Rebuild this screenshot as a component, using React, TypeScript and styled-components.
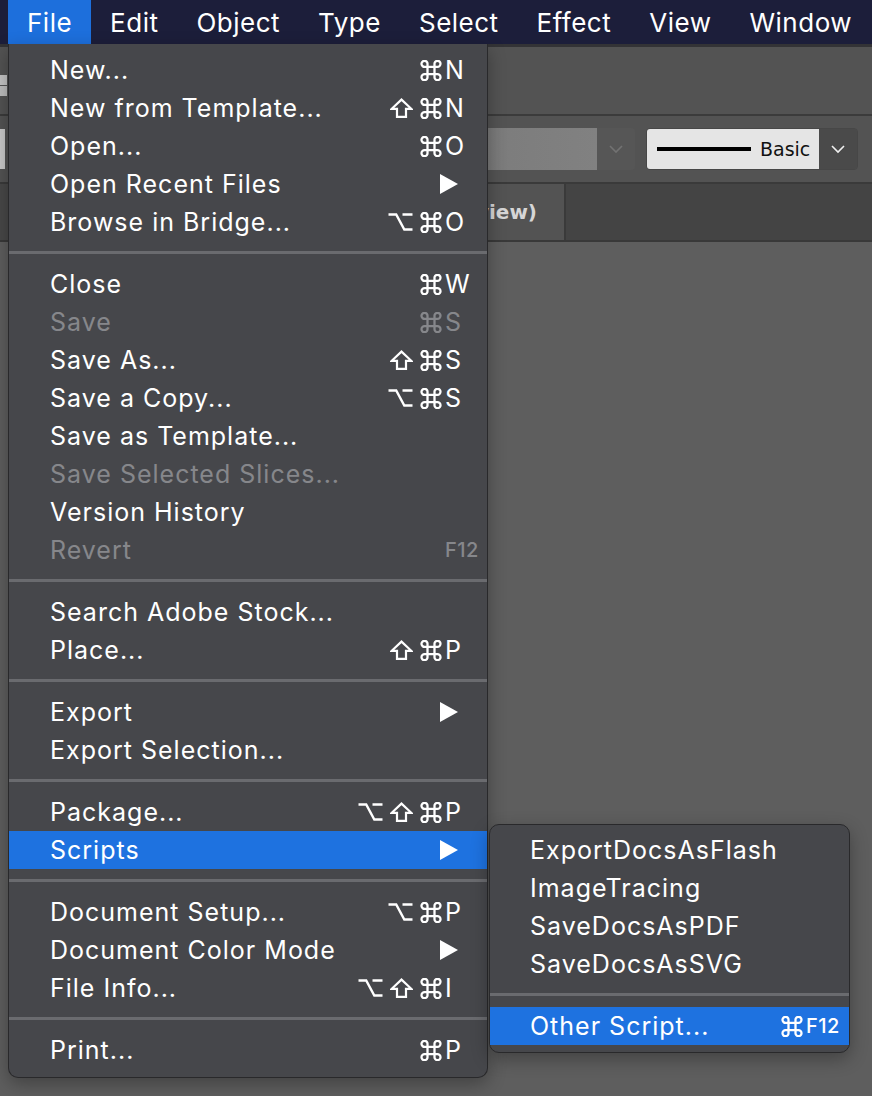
import React from 'react';
import styled, { createGlobalStyle } from 'styled-components';

const GlobalStyle = createGlobalStyle`
  html, body { margin: 0; padding: 0; background: #5e5e5e; }
  body {
    font-family: Inter, "Noto Sans", "DejaVu Sans", sans-serif;
    -webkit-font-smoothing: antialiased;
  }
  #root { height: 1096px; overflow: hidden; }
`;

const Screen = styled.div`
  position: relative;
  width: 872px;
  height: 1096px;
  display: flex;
  flex-direction: column;
  overflow: hidden;
`;

// top system menu bar
const MenuBar = styled.nav`
  height: 44px;
  flex-shrink: 0;
  display: flex;
  padding-left: 8px;
  background: #1c1e3a;
  border-bottom: 3px solid #333336;
`;

const MenuTitle = styled.div<{ $active?: boolean }>`
  display: flex;
  align-items: center;
  padding: 0 19px;
  font-size: 26px;
  letter-spacing: 0.5px;
  color: #fff;
  background: ${({ $active }) => ($active ? '#1d6fdc' : 'transparent')};
`;

// app chrome behind the menu
const Toolbar = styled.div`
  height: 67px;
  flex-shrink: 0;
  display: flex;
  align-items: center;
  background: #535353;
  border-bottom: 2px solid #3b3b3b;
`;

const ToolIcon = styled.div`
  width: 7px;
  height: 21px;
  margin-top: 10px;
  background: #bdbdbd;
  border-top: 10px solid #c4c4c4;
  box-sizing: border-box;
  box-shadow: inset 0 1px 0 #555;
`;

const ControlBar = styled.div`
  height: 66px;
  flex-shrink: 0;
  display: flex;
  align-items: center;
  padding-right: 14px;
  background: #535353;
  border-bottom: 2px solid #3a3a3a;
`;

const Field = styled.div`
  width: 5px;
  height: 40px;
  background: #c9c9c9;
  margin-right: auto;
`;

const FillSelect = styled.div`
  display: flex;
  height: 42px;
  border-radius: 4px;
  overflow: hidden;
  margin-right: 11px;
`;

const FillSwatch = styled.div`
  width: 292px;
  background: linear-gradient(90deg, #5d5d5d 0%, #7d7d7d 70%, #818181 100%);
`;

const Chevron = styled.div<{ $dim?: boolean }>`
  width: 38px;
  display: flex;
  align-items: center;
  justify-content: center;
  background: ${({ $dim }) => ($dim ? '#565656' : '#4a4a4a')};
  color: ${({ $dim }) => ($dim ? '#727272' : '#f0f0f0')};
`;

const StrokeSelect = styled.div`
  display: flex;
  height: 42px;
  border: 1px solid #474747;
  border-radius: 4px;
  overflow: hidden;
  box-sizing: border-box;
`;

const StrokePreview = styled.div`
  width: 172px;
  display: flex;
  align-items: center;
  gap: 9px;
  padding-left: 10px;
  box-sizing: border-box;
  background: #e5e5e5;
  color: #111;
  font-family: "DejaVu Sans", sans-serif;
  font-size: 19px;
`;

const StrokeLine = styled.span`
  width: 94px;
  height: 4px;
  background: #000;
`;

const TabBar = styled.div`
  height: 56px;
  flex-shrink: 0;
  display: flex;
  background: #444;
  border-bottom: 2px solid #393939;
`;

const Tab = styled.div<{ $active?: boolean; $width: number }>`
  width: ${({ $width }) => $width}px;
  flex-shrink: 0;
  display: flex;
  align-items: center;
  justify-content: flex-end;
  padding-right: 27px;
  box-sizing: border-box;
  white-space: nowrap;
  background: ${({ $active }) => ($active ? '#535353' : '#484848')};
  border-right: 2px solid #3a3a3a;
  color: #d6d6d6;
  font-weight: 700;
  font-size: 20px;
  font-family: "DejaVu Sans", sans-serif;
`;

const Canvas = styled.div`
  flex: 1;
  background: #5e5e5e;
`;

// dropdown menus
const MenuPanel = styled.div`
  position: absolute;
  box-sizing: border-box;
  background: #46474b;
  border: 1px solid #29292b;
  box-shadow: 0 6px 18px rgba(0, 0, 0, 0.3);
`;

const FileMenu = styled(MenuPanel)`
  top: 44px;
  left: 8px;
  width: 480px;
  border-top: none;
  border-radius: 0 0 10px 10px;
  padding: 7px 0 8px;
`;

const SubMenu = styled(MenuPanel)`
  top: 824px;
  left: 489px;
  width: 361px;
  border-radius: 10px;
  padding: 6px 0 7px;
`;

const Item = styled.div<{ $highlight?: boolean; $disabled?: boolean; $indent: number }>`
  height: 38px;
  display: flex;
  align-items: center;
  padding-left: ${({ $indent }) => $indent}px;
  font-size: 25px;
  color: ${({ $disabled }) => ($disabled ? '#86878b' : '#fff')};
  background: ${({ $highlight }) => ($highlight ? '#1e72e0' : 'transparent')};
`;

const Label = styled.span`
  flex: 1;
  white-space: nowrap;
  letter-spacing: 1px;
`;

const Mods = styled.span`
  display: flex;
  align-items: center;
  gap: 7px;
  margin-right: 3px;

  svg {
    display: block;
  }
`;

const Key = styled.span<{ $small?: boolean; $col: number }>`
  width: ${({ $col }) => $col}px;
  font-size: ${({ $small }) => ($small ? '20px' : '25px')};
  font-weight: ${({ $small }) => ($small ? 500 : 400)};
  letter-spacing: ${({ $small }) => ($small ? '0.5px' : '0')};
`;

const Arrow = styled.span`
  width: 0;
  height: 0;
  margin-right: 29px;
  border-left: 18px solid currentColor;
  border-top: 10px solid transparent;
  border-bottom: 10px solid transparent;
`;

const Separator = styled.div`
  height: 3px;
  margin: 10px 0 11px;
  background: #6a6b6f;
`;

// modifier key symbols
const CommandIcon = () => (
  <svg width="22" height="21" viewBox="0 0 22 21" fill="none" stroke="currentColor" strokeWidth="2.3">
    <path d="M7.5 6.8v7.4M14.5 6.8v7.4M7.5 6.8h7M7.5 14.2h7" />
    <path d="M7.5 6.8H5a3 3 0 1 1 2.5-2.9zM14.5 6.8V4a3 3 0 1 1 2.9 2.8zM7.5 14.2V17a3 3 0 1 1-2.9-2.8zM14.5 14.2h2.7a3 3 0 1 1-2.7 2.9z" />
  </svg>
);

const ShiftIcon = () => (
  <svg width="23" height="20" viewBox="0 0 23 20" fill="none" stroke="currentColor" strokeWidth="2.2" strokeLinejoin="miter">
    <path d="M11.5 1.6L21.3 10.8H16V18.9H7V10.8H1.7Z" />
  </svg>
);

const OptionIcon = () => (
  <svg width="25" height="20" viewBox="0 0 25 20" fill="none" stroke="currentColor" strokeWidth="2.4">
    <path d="M0.5 2.5H8.2L16.3 17.5H24.5M14.5 2.5H24.5" />
  </svg>
);

const modIcons: Record<string, () => React.ReactElement> = {
  cmd: CommandIcon,
  shift: ShiftIcon,
  opt: OptionIcon,
};

type Mod = 'cmd' | 'shift' | 'opt';

type Entry = {
  label: string;
  mods?: Mod[];
  key?: string;
  small?: boolean;
  sub?: boolean;
  disabled?: boolean;
  highlight?: boolean;
};

const fileGroups: Entry[][] = [
  [
    { label: 'New...', mods: ['cmd'], key: 'N' },
    { label: 'New from Template...', mods: ['shift', 'cmd'], key: 'N' },
    { label: 'Open...', mods: ['cmd'], key: 'O' },
    { label: 'Open Recent Files', sub: true },
    { label: 'Browse in Bridge...', mods: ['opt', 'cmd'], key: 'O' },
  ],
  [
    { label: 'Close', mods: ['cmd'], key: 'W' },
    { label: 'Save', mods: ['cmd'], key: 'S', disabled: true },
    { label: 'Save As...', mods: ['shift', 'cmd'], key: 'S' },
    { label: 'Save a Copy...', mods: ['opt', 'cmd'], key: 'S' },
    { label: 'Save as Template...' },
    { label: 'Save Selected Slices...', disabled: true },
    { label: 'Version History' },
    { label: 'Revert', key: 'F12', small: true, disabled: true },
  ],
  [
    { label: 'Search Adobe Stock...' },
    { label: 'Place...', mods: ['shift', 'cmd'], key: 'P' },
  ],
  [
    { label: 'Export', sub: true },
    { label: 'Export Selection...' },
  ],
  [
    { label: 'Package...', mods: ['opt', 'shift', 'cmd'], key: 'P' },
    { label: 'Scripts', sub: true, highlight: true },
  ],
  [
    { label: 'Document Setup...', mods: ['opt', 'cmd'], key: 'P' },
    { label: 'Document Color Mode', sub: true },
    { label: 'File Info...', mods: ['opt', 'shift', 'cmd'], key: 'I' },
  ],
  [{ label: 'Print...', mods: ['cmd'], key: 'P' }],
];

const scriptGroups: Entry[][] = [
  [
    { label: 'ExportDocsAsFlash' },
    { label: 'ImageTracing' },
    { label: 'SaveDocsAsPDF' },
    { label: 'SaveDocsAsSVG' },
  ],
  [{ label: 'Other Script...', mods: ['cmd'], key: 'F12', small: true, highlight: true }],
];

const titles = ['File', 'Edit', 'Object', 'Type', 'Select', 'Effect', 'View', 'Window'];

const MenuRow = ({ entry, col, indent }: { entry: Entry; col: number; indent: number }) => (
  <Item $highlight={entry.highlight} $disabled={entry.disabled} $indent={indent}>
    <Label>{entry.label}</Label>
    {entry.sub ? (
      <Arrow />
    ) : (
      <>
        {entry.mods && (
          <Mods>
            {entry.mods.map((m) => {
              const Icon = modIcons[m];
              return <Icon key={m} />;
            })}
          </Mods>
        )}
        {entry.key && (
          <Key $small={entry.small} $col={col}>
            {entry.key}
          </Key>
        )}
      </>
    )}
  </Item>
);

const MenuGroups = ({ groups, col, indent }: { groups: Entry[][]; col: number; indent: number }) => (
  <>
    {groups.map((group, gi) => (
      <React.Fragment key={gi}>
        {gi > 0 && <Separator />}
        {group.map((entry) => (
          <MenuRow key={entry.label} entry={entry} col={col} indent={indent} />
        ))}
      </React.Fragment>
    ))}
  </>
);

const ChevronIcon = () => (
  <svg width="16" height="10" viewBox="0 0 16 10" fill="none">
    <path d="M2 2l6 6 6-6" stroke="currentColor" strokeWidth="1.6" />
  </svg>
);

export default function App() {
  return (
    <>
      <GlobalStyle />
      <Screen>
        <MenuBar>
          {titles.map((t) => (
            <MenuTitle key={t} $active={t === 'File'}>
              {t}
            </MenuTitle>
          ))}
        </MenuBar>

        <Toolbar>
          <ToolIcon />
        </Toolbar>

        <ControlBar>
          <Field />
          <FillSelect>
            <FillSwatch />
            <Chevron $dim>
              <ChevronIcon />
            </Chevron>
          </FillSelect>
          <StrokeSelect>
            <StrokePreview>
              <StrokeLine />
              Basic
            </StrokePreview>
            <Chevron>
              <ChevronIcon />
            </Chevron>
          </StrokeSelect>
        </ControlBar>

        <TabBar>
          <Tab $width={140} />
          <Tab $width={426} $active>
            Untitled-2 @ 100% (RGB/Preview)
          </Tab>
        </TabBar>

        <Canvas />

        <FileMenu>
          <MenuGroups groups={fileGroups} col={42} indent={41} />
        </FileMenu>

        <SubMenu>
          <MenuGroups groups={scriptGroups} col={43} indent={40} />
        </SubMenu>
      </Screen>
    </>
  );
}
